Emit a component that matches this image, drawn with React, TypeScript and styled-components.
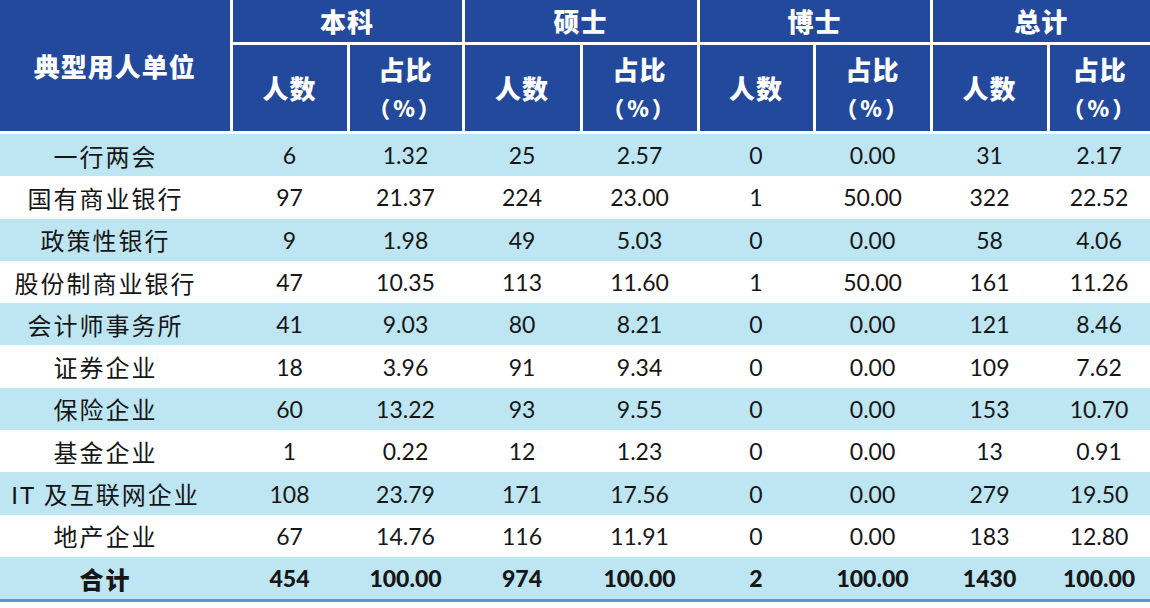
import styled, { createGlobalStyle } from "styled-components";

const GlobalStyle = createGlobalStyle`
  html, body {
    margin: 0;
    padding: 0;
    background: #ffffff;
  }
  body {
    width: 1150px;
    height: 608px;
    overflow: hidden;
  }
`;

type Row = {
  name: string;
  values: string[];
};

const rows: Row[] = [
  { name: "一行两会", values: ["6", "1.32", "25", "2.57", "0", "0.00", "31", "2.17"] },
  { name: "国有商业银行", values: ["97", "21.37", "224", "23.00", "1", "50.00", "322", "22.52"] },
  { name: "政策性银行", values: ["9", "1.98", "49", "5.03", "0", "0.00", "58", "4.06"] },
  { name: "股份制商业银行", values: ["47", "10.35", "113", "11.60", "1", "50.00", "161", "11.26"] },
  { name: "会计师事务所", values: ["41", "9.03", "80", "8.21", "0", "0.00", "121", "8.46"] },
  { name: "证券企业", values: ["18", "3.96", "91", "9.34", "0", "0.00", "109", "7.62"] },
  { name: "保险企业", values: ["60", "13.22", "93", "9.55", "0", "0.00", "153", "10.70"] },
  { name: "基金企业", values: ["1", "0.22", "12", "1.23", "0", "0.00", "13", "0.91"] },
  { name: "IT 及互联网企业", values: ["108", "23.79", "171", "17.56", "0", "0.00", "279", "19.50"] },
  { name: "地产企业", values: ["67", "14.76", "116", "11.91", "0", "0.00", "183", "12.80"] },
];

const total: Row = {
  name: "合计",
  values: ["454", "100.00", "974", "100.00", "2", "100.00", "1430", "100.00"],
};

const groups = ["本科", "硕士", "博士", "总计"];
const colWidths = [231, 117, 115, 118, 117, 116, 117, 117, 102];

const Page = styled.div`
  width: 1150px;
  height: 608px;
  background: #ffffff;
`;

const Table = styled.table`
  width: 1150px;
  table-layout: fixed;
  border-collapse: collapse;
  border-bottom: 3px solid #4a9ee0;
  font-family: "Lato", "Noto Sans CJK SC", sans-serif;
  color: #161616;
`;

const HeadCell = styled.th<{ $h: number }>`
  height: ${(p) => p.$h}px;
  padding: 0;
  background: #23499d;
  color: #ffffff;
  border: 3px solid #ffffff;
  border-top: none;
  font-family: "Noto Sans CJK SC", sans-serif;
  font-weight: 900;
  font-size: 26px;
  letter-spacing: 1px;
  line-height: 38px;
  text-align: center;
  vertical-align: middle;

  &:first-child {
    border-left: none;
  }
  &:last-child {
    border-right: none;
  }
`;

const Percent = styled.span`
  display: block;
  font-size: 22px;
  letter-spacing: 3px;
`;

const BodyRow = styled.tr<{ $shade: boolean }>`
  background: ${(p) => (p.$shade ? "#bde5f2" : "#ffffff")};
`;

const Cell = styled.td<{ $bold?: boolean }>`
  height: 42.3px;
  padding: 0;
  text-align: center;
  vertical-align: middle;
  font-size: 23px;
  font-weight: ${(p) => (p.$bold ? 900 : 400)};
  white-space: nowrap;
`;

const NameCell = styled(Cell)`
  padding-right: 20px;
  font-size: 24px;
  letter-spacing: 2px;
`;

export default function App() {
  return (
    <Page>
      <GlobalStyle />
      <Table>
        <colgroup>
          {colWidths.map((w, i) => (
            <col key={i} style={{ width: w }} />
          ))}
        </colgroup>
        <thead>
          <tr>
            <HeadCell $h={42} rowSpan={2}>
              典型用人单位
            </HeadCell>
            {groups.map((g) => (
              <HeadCell key={g} $h={42} colSpan={2}>
                {g}
              </HeadCell>
            ))}
          </tr>
          <tr>
            {groups.map((g) => [
              <HeadCell key={g + "n"} $h={86}>
                人数
              </HeadCell>,
              <HeadCell key={g + "p"} $h={86}>
                占比
                <Percent>（%）</Percent>
              </HeadCell>,
            ])}
          </tr>
        </thead>
        <tbody>
          {rows.map((r, i) => (
            <BodyRow key={r.name} $shade={i % 2 === 0}>
              <NameCell>{r.name}</NameCell>
              {r.values.map((v, j) => (
                <Cell key={j}>{v}</Cell>
              ))}
            </BodyRow>
          ))}
          <BodyRow $shade>
            <NameCell $bold>{total.name}</NameCell>
            {total.values.map((v, j) => (
              <Cell key={j} $bold>
                {v}
              </Cell>
            ))}
          </BodyRow>
        </tbody>
      </Table>
    </Page>
  );
}
